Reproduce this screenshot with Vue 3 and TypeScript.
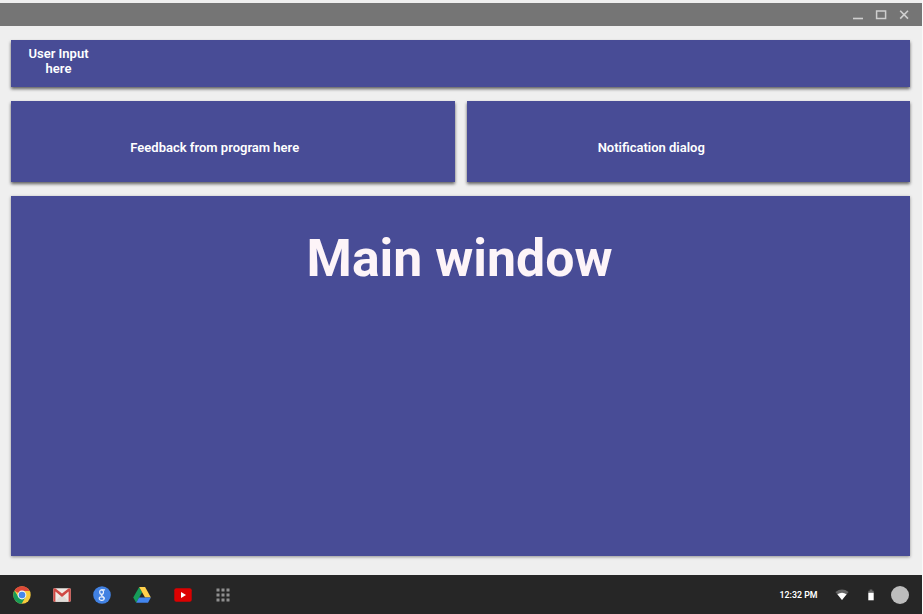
<script setup lang="ts">
import { ref } from 'vue'

const clock = ref<string>('12:32 PM')
const gridRows: number[] = [0, 5, 10]
const gridCols: number[] = [0, 5, 10]
</script>

<template>
  <div class="desktop">
    <header class="titlebar">
      <svg class="control" viewBox="0 0 12 12"><path d="M1 9.5H11" stroke-width="1.6" /></svg>
      <svg class="control" viewBox="0 0 12 12"><path d="M1.6 2.1H10.6V9.5H1.6Z" stroke-width="1.5" /></svg>
      <svg class="control" viewBox="0 0 12 12"><path d="M2.2 1.8L10 9.6M10 1.8L2.2 9.6" stroke-width="1.6" /></svg>
    </header>

    <main class="workspace">
      <section class="panel input"><p class="input-label">User Input here</p></section>
      <div class="split">
        <section class="panel feedback"><p>Feedback from program here</p></section>
        <section class="panel notice"><p>Notification dialog</p></section>
      </div>
      <section class="panel window"><h1>Main window</h1></section>
    </main>

    <footer class="shelf">
      <nav class="apps">
        <svg class="app" viewBox="0 0 18 18">
          <circle cx="9" cy="9" r="8.7" fill="#f7cb3c" />
          <path d="M9 9L1.45 4.65A8.7 8.7 0 0 1 16.7 5H9Z" fill="#dd4939" />
          <path d="M1.45 4.65A8.7 8.7 0 0 0 8.6 17.7L12.5 11L9 9L5.5 11Z" fill="#189b57" />
          <circle cx="9" cy="9" r="4.4" fill="#f5f5f5" />
          <circle cx="9" cy="9" r="3.3" fill="#4688ed" />
        </svg>
        <svg class="app" viewBox="0 0 18 18">
          <rect x="0.3" y="2.2" width="17.4" height="13.6" rx="1.2" fill="#efe9e4" />
          <path d="M2.3 15.8L7.3 10L9 11.3L10.7 10L15.7 15.8" fill="#e0dcd8" />
          <path d="M0.3 3.4Q0.3 2.2 1.5 2.2H2.2L9 7.6L15.8 2.2H16.5Q17.7 2.2 17.7 3.4V14.6Q17.7 15.8 16.5 15.8H15.6V5.6L9 10.9L2.4 5.6V15.8H1.5Q0.3 15.8 0.3 14.6Z" fill="#cf4944" />
        </svg>
        <svg class="app" viewBox="0 0 18 18">
          <circle cx="9" cy="9" r="8.8" fill="#4181e2" />
          <g fill="none" stroke="#e8effb" stroke-width="1.2" stroke-linecap="round">
            <ellipse cx="8.6" cy="6.1" rx="1.9" ry="2.3" />
            <path d="M8.8 3.8H11.6M9 8.4C6.8 9.5 11 10 11.1 12.3" />
            <ellipse cx="8.7" cy="12.6" rx="2.5" ry="1.8" />
          </g>
        </svg>
        <svg class="app" viewBox="0 0 18 18">
          <path d="M6.2 1L0.2 11.5L3.2 16.7L9.1 6.3Z" fill="#169b59" />
          <path d="M6.2 1H12.1L17.9 11.5H12Z" fill="#ffd04b" />
          <path d="M6.1 11.5H17.9L15 16.7H3.2Z" fill="#4285ef" />
        </svg>
        <svg class="app" viewBox="0 0 18 18">
          <rect x="0.3" y="2.2" width="17.4" height="13.5" rx="2" fill="#dc0000" />
          <path d="M7 6.1L12 9L7 11.9Z" fill="#fff" />
        </svg>
        <svg class="app" viewBox="0 0 18 18">
          <template v-for="y in gridRows" :key="y">
            <rect v-for="x in gridCols" :key="x" :x="x + 2.5" :y="y + 2.5" width="3" height="3" fill="#8f8f8f" />
          </template>
        </svg>
      </nav>
      <div class="status">
        <span class="clock">{{ clock }}</span>
        <svg class="wifi" viewBox="0 0 14 12">
          <path d="M0.4 3Q7 -1.8 13.6 3L7 11Z" fill="#666" />
          <path d="M2.4 5.3Q7 2 11.6 5.3L7 11Z" fill="#fff" />
        </svg>
        <svg class="battery" viewBox="0 0 6 12">
          <path d="M0.3 1.7H1.7V0.4H4.3V1.7H5.7V4H0.3Z" fill="#666" />
          <rect x="0.3" y="3.8" width="5.4" height="7.5" fill="#fff" />
        </svg>
        <span class="avatar"></span>
      </div>
    </footer>
  </div>
</template>

<style>
body {
  margin: 0;
  background: #fafafa;
}
</style>

<style scoped>
.desktop {
  box-sizing: border-box;
  width: 922px;
  height: 614px;
  padding-top: 3px;
  display: flex;
  flex-direction: column;
  background: #efefef;
  font-family: Roboto, "Liberation Sans", sans-serif;
  color: #fff;
}
.titlebar {
  height: 23px;
  flex: none;
  display: flex;
  justify-content: flex-end;
  align-items: center;
  gap: 11px;
  padding-right: 12px;
  box-sizing: border-box;
  background: #757575;
}
.control {
  width: 12px;
  height: 12px;
  fill: none;
  stroke: #cfcfcf;
}
.workspace {
  flex: 1;
  display: flex;
  flex-direction: column;
  padding: 14px 12px 19px 11px;
}
.panel {
  box-sizing: border-box;
  background: #484c96;
  box-shadow: 0 2px 3px rgba(0, 0, 0, 0.6);
  font-size: 13px;
  font-weight: 600;
  line-height: 15px;
  text-align: center;
}
.panel p,
.panel h1 {
  margin: 0;
}
.input {
  height: 47px;
  padding: 6px 13px;
  margin-bottom: 14px;
}
.input-label {
  width: 69px;
}
.split {
  display: grid;
  grid-template-columns: 1fr 1fr;
  gap: 12px;
  height: 81px;
  margin-bottom: 14px;
}
.split .panel {
  padding-top: 39px;
}
.split .feedback {
  padding-right: 36px;
}
.split .notice {
  padding-right: 74px;
}
.window {
  flex: 1;
  padding: 32px 2px 0 0;
  box-shadow: 0 1px 3px rgba(0, 0, 0, 0.4);
}
.window h1 {
  font-size: 51.8px;
  line-height: 61px;
  font-weight: 700;
  color: #fdf4f8;
}
.shelf {
  height: 39px;
  flex: none;
  box-sizing: border-box;
  padding: 0 13px 0 12.5px;
  display: flex;
  align-items: center;
  justify-content: space-between;
  background: #262626;
}
.apps {
  display: flex;
  gap: 22.3px;
}
.app {
  width: 18px;
  height: 18px;
}
.status {
  display: flex;
  align-items: center;
}
.clock {
  font-size: 8.8px;
  line-height: 12px;
  font-weight: 600;
  padding-top: 1px;
}
.wifi {
  width: 14px;
  height: 12px;
  margin-left: 17.5px;
}
.battery {
  width: 6px;
  height: 12px;
  margin: 0 17px 0 19px;
}
.avatar {
  width: 18px;
  height: 18px;
  border-radius: 50%;
  background: #bdbdbd;
}
</style>
